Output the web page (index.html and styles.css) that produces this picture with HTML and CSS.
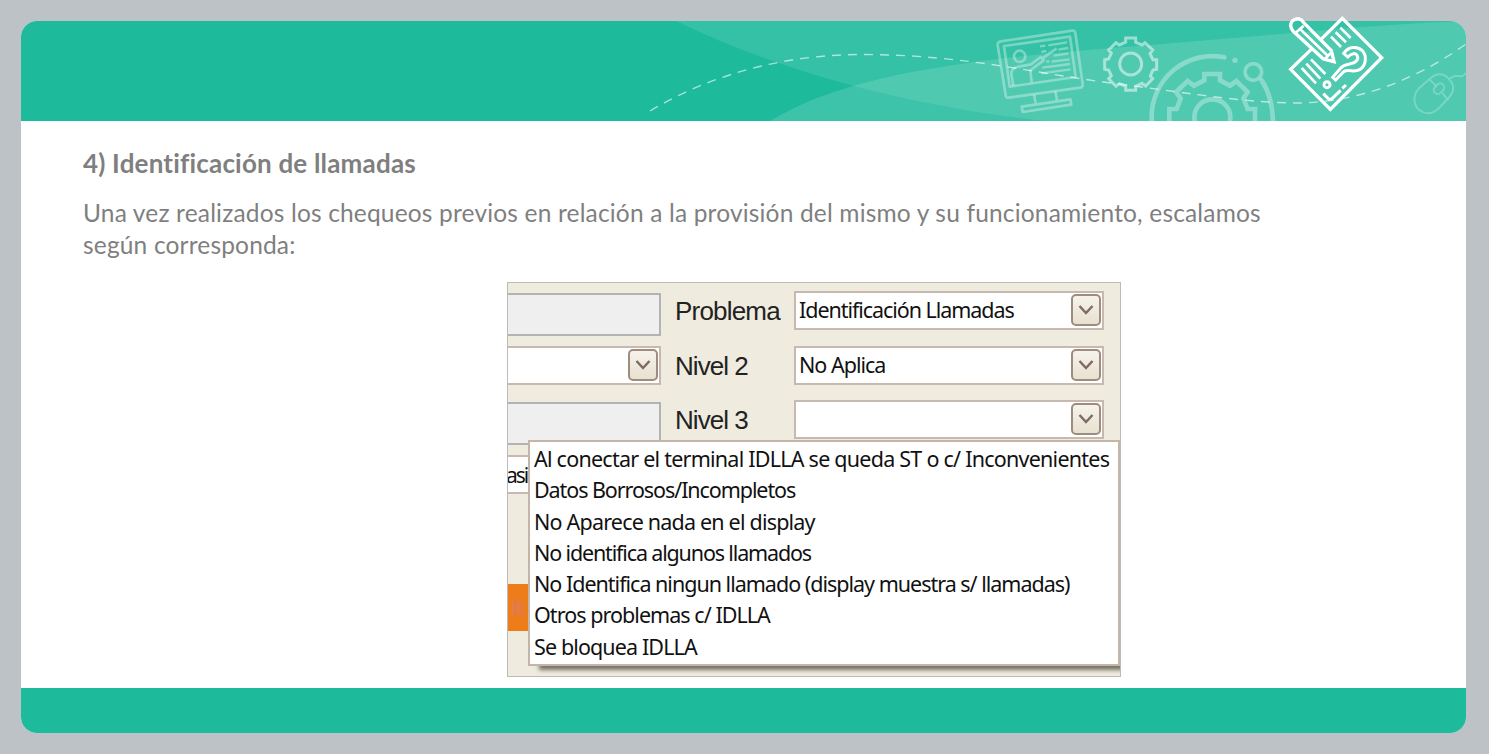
FILE: index.html
```html
<!DOCTYPE html>
<html lang="es">
<head>
<meta charset="utf-8">
<title>Identificación de llamadas</title>
<link rel="stylesheet" href="styles.css">
</head>
<body>
<main class="slide">
  <header class="banner">
    <svg class="banner-art" viewBox="21 21 1445 100" width="1445" height="100">
      <path fill="#fff" fill-opacity=".1" d="M676 21C735 50 795 70 853 86C920 103 980 114 1045 121H1466V21Z"/>
      <path fill="#fff" fill-opacity=".14" d="M770 121C795 106 822 95 853 86C930 64 1020 55 1150 45L1280 34C1350 28 1405 23 1466 21V121Z"/>
      <g transform="translate(960 10) scale(.33333)" fill="none" stroke="#fff" stroke-opacity=".34" stroke-width="8" stroke-linejoin="round">
        <path d="M122 94L336 62Q345 61 346 69L368 222Q369 231 361 233L147 263Q138 264 137 256L113 105Q112 96 122 94Z"/>
        <path d="M132 108L330 80L347 201L149 230Z"/>
        <circle cx="179" cy="139" r="17"/>
        <path d="M160 227L154 192Q153 174 176 170L213 163L242 141L251 151L211 181L215 218M246 146L290 115"/>
        <path stroke-width="7" d="M240 109L256 107M265 106L321 97M244 126L259 123M295 119L325 114M281 137L325 131M259 155L268 154M275 155L329 148M247 173L330 162M244 190L332 178"/>
        <path d="M222 254L227 279M286 244L291 270M185 290L331 268L334 284L188 306Z"/>
      </g>
      <g transform="translate(960 10) scale(.33333)" fill="none" stroke="#fff" stroke-opacity=".5" stroke-width="9">
        <path d="M497 96V84H527V97L546 105L555 98L578 120L570 131L579 149H590V178L579 180L571 198L578 206L557 228L546 220L527 229V241H497V229L478 221L468 229L446 206L454 197L446 180L434 178V149L446 147L454 129L446 120L468 98L478 105Z"/>
        <circle cx="512" cy="162" r="33"/>
      </g>
      <g transform="translate(960 10) scale(.33333)" fill="none" stroke="#fff" stroke-opacity=".32" stroke-width="14" stroke-linejoin="round" stroke-linecap="round">
        <path d="M575 340V320A182 182 0 0 1 793 142"/>
        <path d="M905 211Q938 260 939 340"/>
        <circle cx="880" cy="186" r="25" stroke-width="11"/>
        <circle cx="825" cy="151" r="8" fill="#fff" fill-opacity=".32" stroke="none"/>
        <path stroke-linejoin="miter" d="M628 345V297H650L662 265L648 246L683 213L702 227L733 211V192H780V211L810 227L829 213L863 246L850 265L863 297H885V345"/>
        <circle cx="757" cy="322" r="54"/>
      </g>
      <path class="trail" d="M650 111C715 72 790 54 865 54.500C970 55 1040 75 1120 84C1200 95 1250 103 1300 103C1370 101 1425 73 1466 44"/>
      <g transform="translate(1270 5) scale(.33333)" fill="none" stroke="#fff" stroke-opacity=".24" stroke-width="6">
        <path d="M447 250L479 222C500 202 521 206 533 218C552 235 556 256 538 276L507 309C488 328 465 329 449 316C431 302 426 272 447 250ZM477 222L498 242M517 264L535 286M536 224C553 207 563 214 574 214C581 214 582 208 590 204"/>
        <rect x="495" y="234" width="24" height="34" rx="11" transform="rotate(42 507 251)"/>
      </g>
    </svg>
    <svg class="quiz-icon" viewBox="0 0 104 104" width="104" height="104">
      <g transform="translate(-14 -7) scale(.33333)" fill="none" stroke="#fff" stroke-width="10">
        <path d="M153 103L217 40L335 158L181 313L62 193L126 131"/>
        <path d="M101 53L184 137L192 170L160 162L69 78Q56 61 67 48Q81 35 96 46Z"/>
        <path stroke-width="8" d="M101 62L77 83M91 73L174 153M162 165L187 139"/>
        <path d="M95 189L138 235M109 176L151 221M123 163L166 207M183 95L213 126M197 82L228 112M211 68L242 99" stroke-width="8"/>
        <path d="M221 145C235 125 260 122 276 136C293 154 287 184 269 194C251 204 237 191 221 200L197 225L188 217L213 188C229 172 247 181 258 169C270 158 259 144 250 146Q242 147 233 156Z" stroke-width="9"/>
        <circle cx="171" cy="239" r="9" stroke-width="9"/>
        <path d="M160 266L175 281Q181 286 187 280L212 256M217 250L228 240" stroke-width="9"/>
      </g>
    </svg>
  </header>

  <section class="content">
    <h1 class="title">4) Identificación de llamadas</h1>
    <p class="lead"><span class="line-a">Una vez realizados los chequeos previos en relación a la provisión del mismo y su funcionamiento, escalamos</span><br><span class="line-b">según corresponda:</span></p>

    <div class="capture">
      <div class="side">
        <div class="box disabled"></div>
        <div class="box select"><span class="arrow"><svg viewBox="0 0 16 12" width="16" height="12"><path d="M1.500 2L8 9L14.500 2"/></svg></span></div>
        <div class="box disabled"></div>
        <div class="box clipped">asi</div>
        <div class="button">it</div>
      </div>
      <div class="form">
        <span class="label l1">Problema</span>
        <div class="box select"><span class="value v1">Identificación Llamadas</span><span class="arrow"><svg viewBox="0 0 16 12" width="16" height="12"><path d="M1.500 2L8 9L14.500 2"/></svg></span></div>
        <span class="label l2">Nivel 2</span>
        <div class="box select"><span class="value v2">No Aplica</span><span class="arrow"><svg viewBox="0 0 16 12" width="16" height="12"><path d="M1.500 2L8 9L14.500 2"/></svg></span></div>
        <span class="label l2">Nivel 3</span>
        <div class="box select"><span class="arrow"><svg viewBox="0 0 16 12" width="16" height="12"><path d="M1.500 2L8 9L14.500 2"/></svg></span></div>
      </div>
      <ul class="menu">
        <li class="m1">Al conectar el terminal IDLLA se queda ST o c/ Inconvenientes</li>
        <li class="m2">Datos Borrosos/Incompletos</li>
        <li class="m3">No Aparece nada en el display</li>
        <li class="m4">No identifica algunos llamados</li>
        <li class="m5">No Identifica ningun llamado (display muestra s/ llamadas)</li>
        <li class="m6">Otros problemas c/ IDLLA</li>
        <li class="m7">Se bloquea IDLLA</li>
      </ul>
    </div>
  </section>
  <footer class="foot"></footer>
</main>
</body>
</html>
```
FILE: styles.css
```css
* { box-sizing: border-box; }
body { margin: 0; height: 754px; padding: 21px 23px 21px 21px; background: #bdc2c6; overflow: hidden; }
.slide { display: flex; flex-direction: column; width: 1445px; height: 712px; border-radius: 16px; background: #fff; }
.banner { position: relative; height: 100px; flex: none; border-radius: 16px 16px 0 0; background: #1dba9b; }
.banner-art { display: block; border-radius: 16px 16px 0 0; overflow: hidden; }
.trail { fill: none; stroke: #fff; stroke-opacity: .6; stroke-width: 1.4; stroke-dasharray: 9 7; }
.quiz-icon { position: absolute; left: 1263px; top: -9px; }
.content { flex: 1; padding: 26px 62px 0; color: #7f7f7f; font-family: Lato, sans-serif; font-variant-ligatures: none; }
.title { margin: 0; font-size: 26px; line-height: 32px; font-weight: 700; white-space: nowrap; letter-spacing: .19px; }
.lead { margin: 18px 0 0; font-size: 24.500px; line-height: 32px; white-space: nowrap; letter-spacing: .17px; }
.capture { position: relative; display: flex; width: 614px; height: 395px; margin: 21px 0 0 424px; border: 1px solid #bbb; background: #efebde; overflow: hidden; color: #111; font: 21.500px/36px "Noto Sans", sans-serif; white-space: nowrap; }
.side { width: 153px; display: flex; flex-direction: column; padding-top: 10px; }
.box { display: flex; flex: none; height: 39px; border: 2px solid #c8b9b0; background: #fff; }
.side .box { border-left: 0; }
.side .disabled { height: 43px; background: #efefef; border-color: #b3b3b3; margin-bottom: 10px; }
.side .select { margin-bottom: 17px; }
.clipped { margin-bottom: 90px; letter-spacing: -2px; text-indent: -2px; font-size: 21px; }
.button { height: 47px; width: 22px; background: #ed7d1b; color: #e27b55; font: bold 20px/47px "Noto Sans", sans-serif; padding-left: 3px; letter-spacing: -1px; }
.select { justify-content: space-between; padding: 1px 1px 2px 3px; }
.side .select { justify-content: flex-end; }
.value { line-height: 32px; }
.v1 { letter-spacing: -1.050px; }
.v2 { letter-spacing: -1px; }
.arrow { display: flex; flex: none; align-items: center; justify-content: center; width: 30px; height: 32px; margin-left: auto; border: 2px solid #a08b7f; border-radius: 5px; background: linear-gradient(#f6f3ec, #e9e1d0); }
.arrow path { fill: none; stroke: #806b61; stroke-width: 2.500; }
.form { display: grid; grid-template-columns: 119px 310px; grid-auto-rows: 39px; row-gap: 15.700px; margin: 8px 0 0 14px; }
.label { font: 26px/41px "Liberation Sans", sans-serif; color: #222; }
.l1 { letter-spacing: -.800px; }
.l2 { letter-spacing: -.950px; }
.menu { position: absolute; left: 20px; top: 157px; width: 592px; height: 226px; margin: 0; padding: 1px 4px; list-style: none; background: #fff; border: 2px solid #c3b5aa; box-shadow: 10px 5px 4px -1px #777166; line-height: 31.300px; }
.menu li { width: max-content; }
.m1 { letter-spacing: -.755px; }
.m2 { letter-spacing: -1.080px; }
.m3 { letter-spacing: -.800px; }
.m4 { letter-spacing: -1.150px; }
.m5 { letter-spacing: -1px; }
.m6 { letter-spacing: -.950px; }
.m7 { letter-spacing: -.880px; }
.foot { height: 45px; flex: none; background: #1dba9b; border-radius: 0 0 16px 16px; }
```
